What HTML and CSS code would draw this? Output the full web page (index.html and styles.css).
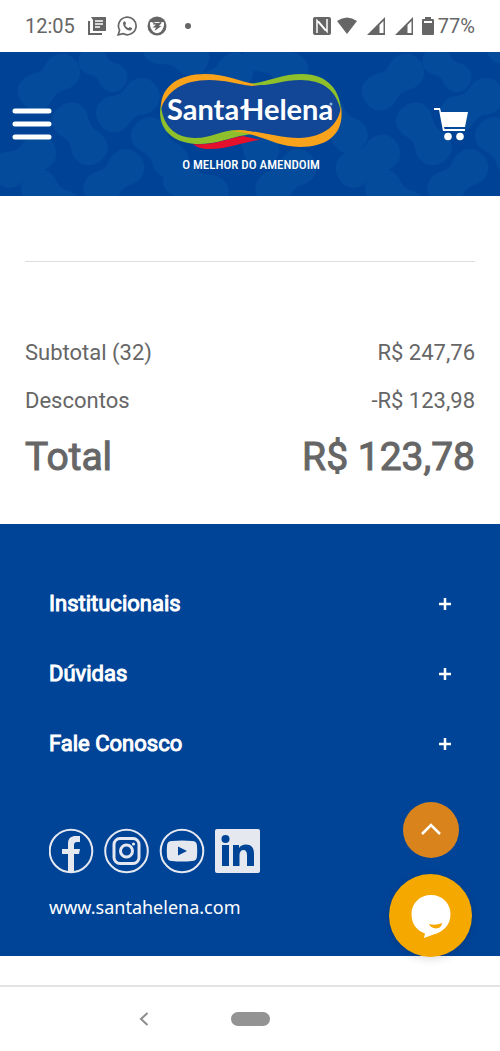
FILE: index.html
```
<!DOCTYPE html>
<html lang="pt-BR">
<head>
<meta charset="utf-8">
<meta name="viewport" content="width=device-width, initial-scale=1">
<title>Santa Helena</title>
<link rel="stylesheet" href="styles.css">
</head>
<body>
<div class="status-bar">
  <div class="status-group">
    <span class="clock">12:05</span>
    <svg width="20" height="20" viewBox="0 0 20 20" fill="none" aria-hidden="true"><path d="M2 5v13h13" stroke="#666" stroke-width="2"/><path d="M4 1h15v14H6V4z" fill="#666"/><path d="M8 5h8M8 8h8M8 11h5" stroke="#fff" stroke-width="1.4"/></svg>
    <svg class="gap-wide" width="20" height="20" viewBox="0 0 20 20" fill="none" aria-hidden="true"><path d="M1.200 18.800l1.400-4.600A8.800 8.800 0 1 1 6 17.600z" stroke="#666" stroke-width="1.7"/><path d="M6.300 6c1-1.300 1.700-1 2.100.1l.6 1.500c.1.500-.8 1.300-.7 1.600.7 1.300 1.700 2.200 3.100 2.800.5.100 1.100-1.100 1.500-1l1.900.9c.9.500-.4 2.400-1.700 2.600C9.400 14.900 5 9.500 6.300 6z" fill="#666"/></svg>
    <svg class="gap-wide" width="20" height="20" viewBox="0 0 20 20" fill="none" aria-hidden="true"><circle cx="10" cy="10" r="9.500" fill="#666"/><path d="M3 6.500c1.500-1 2.500-.5 3 .5 2-1.500 6-1.500 8 0 .5-1 2-1.500 3-.5.5 3-1 7-3.500 9.500-2 1.500-5 1.500-7 0C4 13.500 2.500 10 3 6.500z" fill="#fff"/><path d="M6.500 7h8l-2.500 3h2.500l-7 5 1.500-3.500H5.500L9 8.500H6z" fill="#666"/></svg>
    <span class="dot"></span>
  </div>
  <div class="status-group status-right">
    <svg width="20" height="20" viewBox="0 0 20 20" fill="none" aria-hidden="true"><rect x="1" y="1" width="18" height="18" rx="2" fill="#666"/><path d="M5 17V4.500l8.500 10M15 3v12.500L6.500 5.500" stroke="#fff" stroke-width="1.500"/></svg>
    <svg width="22" height="20" viewBox="0 0 22 20" aria-hidden="true"><path d="M1 5Q11-2 21 5L11 18z" fill="#666"/></svg>
    <svg class="gap-signal" width="20" height="20" viewBox="0 0 20 20" aria-hidden="true"><path d="M1 19L19 1v18z" fill="#666"/><path d="M13.500 9l4-4v12h-4z" fill="#fff"/></svg>
    <svg class="gap-signal" width="20" height="20" viewBox="0 0 20 20" aria-hidden="true"><path d="M1 19L19 1v18z" fill="#666"/><path d="M13.500 9l4-4v12h-4z" fill="#fff"/></svg>
    <svg class="gap-signal" width="12" height="20" viewBox="0 0 12 20" aria-hidden="true"><path d="M3 1h6v2h2q1 0 1 1v14q0 1-1 1H1q-1 0-1-1V4q0-1 1-1h2z" fill="#666"/><path d="M2 5h8v2H2z" fill="#fff"/></svg>
    <span class="battery">77%</span>
  </div>
</div>

<header class="site-header">
  <svg class="pattern" width="100%" height="100%" aria-hidden="true">
    <defs>
      <path id="peanut" d="M-34 0C-34-12-26-19-15-18-8-17-6-14 0-14S9-18 16-18C27-18 34-11 34 0S27 18 16 18C9 18 6 14 0 14S-8 17-15 18C-26 19-34 12-34 0z"/>
      <g id="peanuts" fill="#044b9b">
        <use href="#peanut" transform="translate(49 30) rotate(-38)"/>
        <use href="#peanut" transform="translate(103 17) rotate(40) scale(.8)"/>
        <use href="#peanut" transform="translate(128 53) rotate(-33)"/>
        <use href="#peanut" transform="translate(80 82) rotate(55)"/>
        <use href="#peanut" transform="translate(24 109) rotate(-30)"/>
        <use href="#peanut" transform="translate(52 146) rotate(40)"/>
        <use href="#peanut" transform="translate(114 126) rotate(-42)"/>
        <use href="#peanut" transform="translate(160 96) rotate(50)"/>
        <use href="#peanut" transform="translate(176 0) rotate(20)"/>
        <use href="#peanut" transform="translate(196 134) rotate(25)"/>
        <use href="#peanut" transform="translate(222 28) rotate(-35)"/>
        <use href="#peanut" transform="translate(276 10) rotate(30)"/>
        <use href="#peanut" transform="translate(300 50) rotate(-33)"/>
        <use href="#peanut" transform="translate(252 84) rotate(55)"/>
        <use href="#peanut" transform="translate(286 126) rotate(-42)"/>
        <use href="#peanut" transform="translate(338 72) rotate(45)"/>
      </g>
    </defs>
    <use href="#peanuts"/>
    <use href="#peanuts" x="344"/>
  </svg>
  <button class="icon-button" type="button" aria-label="Menu">
    <svg width="40" height="34" viewBox="0 0 40 34" aria-hidden="true"><path d="M3 4h34M3 17h34M3 30h34" stroke="#fff" stroke-width="5" stroke-linecap="round"/></svg>
  </button>
  <a class="logo" href="#" aria-label="Santa Helena, o melhor do amendoim">
    <svg width="184" height="104" viewBox="0 0 184 104" aria-hidden="true">
      <path d="M2 38C2 15 20 4 46 4c22 0 35 9 53 9 16 0 28-8 44-8 27 0 39 18 39 36 0 22-13 34-38 34-23 0-38-13-64-13-18 0-26 9-42 9C14 71 2 56 2 38z" fill="#124696"/>
      <path d="M2 37C1 16 18 2 46 2c23 0 36 9 56 11l-9 1C77 12 66 8 50 8 24 8 8 19 2 37z" fill="#f9a21b"/>
      <path d="M90 12C109 10 122 2 143 2c26 0 39 17 39 38C178 19 165 8 141 8c-19 0-32 8-51 4z" fill="#8dc02b"/>
      <path d="M2 32C3 52 15 66 36 66c17 0 26-8 43-8 9 0 14 2 20 4-23 0-35 10-58 10C13 72-3 56 2 32z" fill="#8dc02b"/>
      <path d="M34 72c20 2 36-6 50-8l18 4C86 69 72 77 50 77c-7 0-13-2-16-5z" fill="#e4102c"/>
      <path d="M72 59c22-3 44 7 68 7 24-1 40-12 42-32 4 27-12 41-41 41-25 0-40-14-69-16z" fill="#f9a21b"/>
      <text class="wordmark" x="8" y="48">Santa</text>
      <text class="wordmark" x="83" y="48">Helena</text>
      <path d="M82 37q3-4 7-1" fill="none" stroke="#fff" stroke-width="3"/>
      <circle cx="172" cy="32" r="1.500" fill="#8cb5df"/>
      <text class="tagline" x="92" y="97" text-anchor="middle">O MELHOR DO AMENDOIM</text>
    </svg>
  </a>
  <button class="icon-button cart" type="button" aria-label="Carrinho">
    <svg width="34" height="34" viewBox="0 0 34 34" aria-hidden="true"><path d="M0 1h6l1 4h27l-3 15H10l.5 2H31v2H9L5 3H0z" fill="#fff"/><circle cx="14" cy="29.500" r="3.800" fill="#fff"/><circle cx="26" cy="29.500" r="3.800" fill="#fff"/></svg>
  </button>
</header>

<main class="summary">
  <hr class="rule">
  <dl class="totals">
    <div class="row"><dt>Subtotal (32)</dt><dd>R$ 247,76</dd></div>
    <div class="row"><dt>Descontos</dt><dd>-R$ 123,98</dd></div>
    <div class="row row-total"><dt>Total</dt><dd>R$ 123,78</dd></div>
  </dl>
</main>

<footer class="footer">
  <button class="section" type="button"><span>Institucionais</span><svg width="14" height="14" viewBox="0 0 14 14" aria-hidden="true"><path d="M7 1v12M1 7h12" stroke="#fff" stroke-width="2.500"/></svg></button>
  <button class="section" type="button"><span>Dúvidas</span><svg width="14" height="14" viewBox="0 0 14 14" aria-hidden="true"><path d="M7 1v12M1 7h12" stroke="#fff" stroke-width="2.500"/></svg></button>
  <button class="section" type="button"><span>Fale Conosco</span><svg width="14" height="14" viewBox="0 0 14 14" aria-hidden="true"><path d="M7 1v12M1 7h12" stroke="#fff" stroke-width="2.500"/></svg></button>
  <nav class="social" aria-label="Redes sociais">
    <a href="#" aria-label="Facebook"><svg width="46" height="46" viewBox="0 0 46 46"><circle cx="22" cy="23" r="21.300" fill="none" stroke="#e6e8f0" stroke-width="2"/><path d="M19 44V26h-6v-5h6v-5c0-6 3-8 8-8h4v6h-3c-2 0-3 1-3 3v4h6l-1 5h-5v18z" fill="#e6e8f0"/></svg></a>
    <a href="#" aria-label="Instagram"><svg width="46" height="46" viewBox="0 0 46 46" fill="none" stroke="#e6e8f0"><circle cx="22.500" cy="23" r="21.300" stroke-width="2"/><rect x="10" y="10.500" width="25" height="25" rx="6" stroke-width="3"/><circle cx="22.500" cy="23" r="6" stroke-width="3"/><circle cx="29.500" cy="16" r="1.600" fill="#e6e8f0" stroke="none"/></svg></a>
    <a href="#" aria-label="YouTube"><svg width="46" height="46" viewBox="0 0 46 46"><circle cx="23" cy="23" r="21.300" fill="none" stroke="#e6e8f0" stroke-width="2"/><path d="M13 13q10-1 20 0 5 0 5 5 .5 5 0 10 0 5-5 5-10 1-20 0-5 0-5-5-.5-5 0-10 0-5 5-5z" fill="#e6e8f0"/><path d="M19 18.500v9l9-4.500z" fill="#004498"/></svg></a>
    <a href="#" aria-label="LinkedIn"><svg width="46" height="46" viewBox="0 0 46 46"><rect x="1" y="1" width="45" height="44" rx="2" fill="#e6e8f0"/><circle cx="11.500" cy="11" r="4" fill="#004498"/><path d="M8 17h7v21H8zM19 17h6v3q2-3.500 7-3.500c5 0 8 3 8 9V38h-7V27c0-3-1-5-3.500-5S25.500 24 25.500 27v11H19z" fill="#004498"/></svg></a>
  </nav>
  <a class="site-link" href="#">www.santahelena.com</a>
</footer>

<div class="nav-bar">
  <button class="nav-back" type="button" aria-label="Voltar"><svg width="10" height="16" viewBox="0 0 10 16" aria-hidden="true"><path d="M8.500 2L2 8l6.500 6" fill="none" stroke="#8d8d8d" stroke-width="2"/></svg></button>
  <button class="nav-home" type="button" aria-label="Início"></button>
</div>

<div class="floating">
  <button class="to-top" type="button" aria-label="Voltar ao topo"><svg width="22" height="14" viewBox="0 0 22 14" aria-hidden="true"><path d="M2 11l9-9 9 9" fill="none" stroke="#fff" stroke-width="2.600"/></svg></button>
  <button class="chat" type="button" aria-label="Atendimento"><svg width="42" height="44" viewBox="0 0 42 44" aria-hidden="true"><path d="M21 1c11 0 19.500 8 19.500 19 0 12-8 18-17 20.500L14 44l1-4.500C7 37 1.500 30 1.500 20 1.500 9 10 1 21 1z" fill="#fff"/><path d="M19 30c4 1 8 1 13-1 0 7-11 7-13 1z" fill="#f5a800"/></svg></button>
</div>
</body>
</html>
```
FILE: styles.css
```
* { box-sizing: border-box; }
body {
  margin: 0;
  position: relative;
  background: #fff;
  color: #666;
  font: 22px/28px Roboto, sans-serif;
}
button {
  border: 0;
  padding: 0;
  background: none;
  color: inherit;
  font: inherit;
  cursor: pointer;
}
svg { display: block; }

.status-bar {
  display: flex;
  justify-content: space-between;
  align-items: center;
  height: 52px;
  padding: 0 25px;
  font-size: 20px;
}
.status-group { display: flex; align-items: center; }
.clock { margin-right: 12px; }
.gap-wide { margin-left: 10px; }
.dot { width: 6px; height: 6px; margin-left: 18px; border-radius: 50%; background: #666; }
.status-right svg + svg { margin-left: 4px; }
.status-right .gap-signal.gap-signal { margin-left: 8px; }
.battery { margin-left: 4px; }

.site-header {
  position: relative;
  display: grid;
  grid-template-columns: 1fr auto 1fr;
  align-items: center;
  height: 144px;
  padding: 0 10px 0 12px;
  background: #004396;
}
.pattern { position: absolute; inset: 0; }
.icon-button, .logo { position: relative; }
.icon-button { justify-self: start; }
.cart { justify-self: end; margin-right: 22px; }
.wordmark { fill: #fff; font: 700 29px Lato, sans-serif; }
.tagline { fill: #fff; font: 500 13px "Roboto Condensed", Roboto, sans-serif; }

.summary { padding: 65px 25px 41px; }
.rule { margin: 0; border: 0; border-top: 1px solid #ddd; }
.totals { margin: 73px 0 0; }
.row { display: flex; justify-content: space-between; padding: 4px 0 16px; }
.row dt, .row dd { margin: 0; }
.row-total {
  padding: 0;
  font-size: 39px;
  line-height: 52px;
  -webkit-text-stroke: 1px #666;
}

.footer { padding: 45px 48px 35px 49px; background: #004498; color: #fff; }
.section {
  display: flex;
  justify-content: space-between;
  align-items: center;
  width: 100%;
  height: 70px;
  -webkit-text-stroke: 1px #fff;
}
.social { display: flex; gap: 9px; margin-top: 49px; }
.site-link {
  display: inline-block;
  margin-top: 19px;
  color: #fff;
  font: 18px/28px "Noto Sans", sans-serif;
  text-decoration: none;
}

.nav-bar {
  display: grid;
  grid-template-columns: 1fr auto 1fr;
  align-items: center;
  height: 66px;
  margin-top: 29px;
  border-top: 2px solid #e4e4e4;
}
.nav-back { justify-self: end; margin-right: 82px; }
.nav-home { width: 39px; height: 14px; border-radius: 7px; background: #939393; }

.floating {
  position: absolute;
  right: 28px;
  bottom: 94px;
  display: grid;
  justify-items: center;
  gap: 16px;
}
.to-top, .chat { display: grid; place-items: center; border-radius: 50%; }
.to-top { width: 56px; height: 56px; background: #d9831c; }
.chat { width: 83px; height: 83px; background: #f5a800; box-shadow: 0 2px 8px rgba(0, 0, 0, 0.15); }
```
